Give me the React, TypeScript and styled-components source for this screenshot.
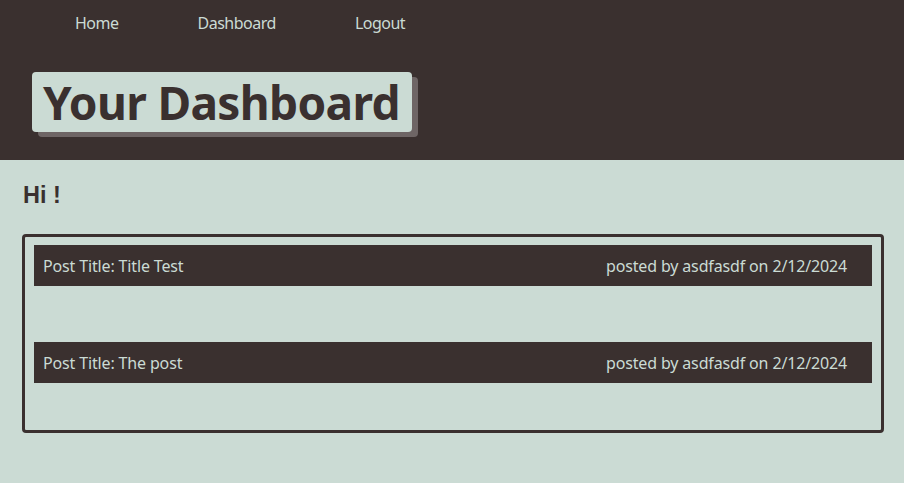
import React from "react";
import styled, { createGlobalStyle } from "styled-components";

const DARK = "#3a302f";
const LIGHT = "#cbdbd4";

const Global = createGlobalStyle`
  html, body { margin: 0; padding: 0; background: ${LIGHT}; }
  body { font-family: "Noto Sans", "Open Sans", sans-serif; }
`;

const Header = styled.header`
  background: ${DARK};
  height: 160px;
  box-sizing: border-box;
  padding-top: 12px;
`;

const Nav = styled.nav`
  display: flex;
  gap: 79px;
  padding-left: 75px;
  height: 22px;
  align-items: center;
`;

const NavLink = styled.a`
  color: ${LIGHT};
  font-size: 16px;
  letter-spacing: -0.5px;
  text-decoration: none;
  line-height: 22px;
`;

const TitleRow = styled.div`
  padding: 38px 0 0 32px;
  display: flex;
`;

const TitleBox = styled.h1`
  margin: 0;
  background: ${LIGHT};
  color: ${DARK};
  font-size: 46px;
  letter-spacing: -0.65px;
  font-weight: 700;
  height: 60px;
  line-height: 60px;
  padding: 0 12px 0 11px;
  border-radius: 4px;
  box-shadow: 6px 5px 0 #6e6565;
`;

const Main = styled.main`
  padding: 20px 20px 0 22px;
`;

const Greeting = styled.h2`
  margin: 0 0 0 1px;
  font-family: "Liberation Sans", Arial, sans-serif;
  font-weight: 700;
  font-size: 23.5px;
  line-height: 30px;
  color: ${DARK};
`;

const PostList = styled.section`
  margin-top: 24px;
  border: 3px solid ${DARK};
  border-radius: 4px;
  padding: 8px 9px 0 9px;
  display: flex;
  flex-direction: column;
  gap: 9px;
`;

const Post = styled.article`
  display: flex;
  flex-direction: column;
`;

const PostHeader = styled.div`
  background: ${DARK};
  color: ${LIGHT};
  height: 41px;
  display: flex;
  align-items: center;
  justify-content: space-between;
  padding: 0 25px 0 9px;
  font-size: 16px;
  letter-spacing: -0.15px;
`;

const PostBody = styled.div`
  height: 47px;
`;

const posts = [
  { title: "Title Test", user: "asdfasdf", date: "2/12/2024" },
  { title: "The post", user: "asdfasdf", date: "2/12/2024" },
];

export default function App() {
  return (
    <>
      <Global />
      <Header>
        <Nav>
          <NavLink href="#">Home</NavLink>
          <NavLink href="#">Dashboard</NavLink>
          <NavLink href="#">Logout</NavLink>
        </Nav>
        <TitleRow>
          <TitleBox>Your Dashboard</TitleBox>
        </TitleRow>
      </Header>
      <Main>
        <Greeting>Hi !</Greeting>
        <PostList>
          {posts.map((p) => (
            <Post key={p.title}>
              <PostHeader>
                <span>Post Title: {p.title}</span>
                <span>
                  posted by {p.user} on {p.date}
                </span>
              </PostHeader>
              <PostBody />
            </Post>
          ))}
        </PostList>
      </Main>
    </>
  );
}
